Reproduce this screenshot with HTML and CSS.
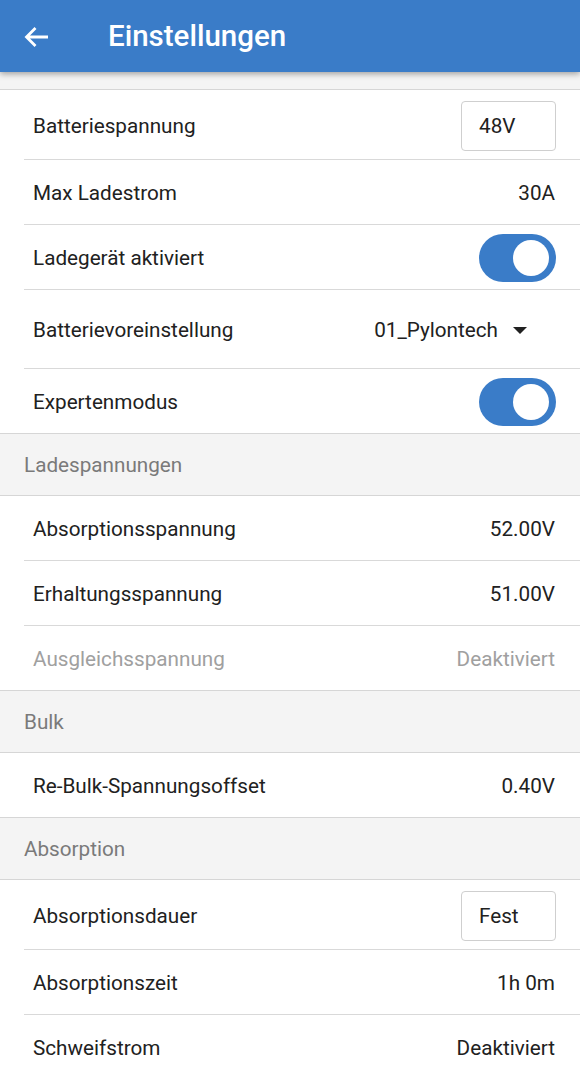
FILE: index.html
```html
<!DOCTYPE html>
<html lang="de">
<head>
<meta charset="utf-8">
<title>Einstellungen</title>
<link rel="stylesheet" href="styles.css">
</head>
<body>
<header class="appbar">
  <svg class="back" width="26" height="22" viewBox="0 0 26 22" aria-hidden="true">
    <path d="M25 11H3.5 M12.5 2 L3.5 11 L12.5 20" fill="none" stroke="#fff" stroke-width="2.8" stroke-linejoin="miter"/>
  </svg>
  <h1 class="title">Einstellungen</h1>
</header>
<main class="list">
  <div class="spacer"></div>
  <div class="group">
    <div class="row row-input"><span class="label">Batteriespannung</span><span class="box">48V</span></div>
    <div class="row"><span class="label">Max Ladestrom</span><span class="value">30A</span></div>
    <div class="row"><span class="label">Ladegerät aktiviert</span><span class="toggle"><span class="knob"></span></span></div>
    <div class="row row-select"><span class="label">Batterievoreinstellung</span><span class="select">01_Pylontech<span class="caret"></span></span></div>
    <div class="row"><span class="label">Expertenmodus</span><span class="toggle"><span class="knob"></span></span></div>
  </div>
  <div class="section">Ladespannungen</div>
  <div class="group">
    <div class="row"><span class="label">Absorptionsspannung</span><span class="value">52.00V</span></div>
    <div class="row"><span class="label">Erhaltungsspannung</span><span class="value">51.00V</span></div>
    <div class="row disabled"><span class="label">Ausgleichsspannung</span><span class="value">Deaktiviert</span></div>
  </div>
  <div class="section">Bulk</div>
  <div class="group">
    <div class="row"><span class="label">Re-Bulk-Spannungsoffset</span><span class="value">0.40V</span></div>
  </div>
  <div class="section">Absorption</div>
  <div class="group">
    <div class="row row-input"><span class="label">Absorptionsdauer</span><span class="box">Fest</span></div>
    <div class="row"><span class="label">Absorptionszeit</span><span class="value">1h 0m</span></div>
    <div class="row"><span class="label">Schweifstrom</span><span class="value">Deaktiviert</span></div>
  </div>
</main>
</body>
</html>
```
FILE: styles.css
```css
* { box-sizing: border-box; }
html, body { margin: 0; padding: 0; }
body {
  width: 580px;
  height: 1079px;
  overflow: hidden;
  background: #fff;
  font-family: Roboto, "Noto Sans", sans-serif;
  color: #212121;
}
.appbar {
  position: relative;
  z-index: 2;
  height: 72px;
  background: #3a7cc8;
  display: flex;
  align-items: center;
  padding-left: 23px;
  box-shadow: 0 2px 6px rgba(0,0,0,0.35);
}
.back { display: block; margin-top: 1px; }
.title {
  margin: 0 0 0 59px;
  font-size: 29.5px;
  font-weight: 500;
  color: #fff;
}
.list { display: flex; flex-direction: column; }
.spacer {
  height: 18px;
  background: #f4f4f4;
  border-bottom: 1px solid #d6d6d6;
}
.group { display: flex; flex-direction: column; }
.row {
  height: 65px;
  flex: none;
  margin-left: 24px;
  padding: 2px 25px 0 9px;
  display: flex;
  align-items: center;
  justify-content: space-between;
  border-bottom: 1px solid #d9d9d9;
  font-size: 20.7px;
}
.group .row:last-child { border-bottom: none; height: 64px; }
.row-input { height: 70px; }
.group .row-input:last-child { height: 70px; }
.row-select { height: 79px; }
.row.disabled { color: #a0a0a0; }
.box {
  width: 95px;
  height: 50px;
  border: 1px solid #cfcfcf;
  border-radius: 4px;
  display: flex;
  align-items: center;
  padding-left: 17px;
  margin-right: -1px;
}
.toggle {
  width: 77px;
  height: 48px;
  border-radius: 24px;
  background: #3a7cc8;
  display: flex;
  align-items: center;
  justify-content: flex-end;
  padding-right: 7px;
  margin-right: -1px;
}
.knob {
  width: 36px;
  height: 36px;
  border-radius: 50%;
  background: #fff;
}
.select {
  display: flex;
  align-items: center;
  margin-right: 28px;
}
.caret {
  width: 0;
  height: 0;
  margin-left: 15px;
  border-left: 7px solid transparent;
  border-right: 7px solid transparent;
  border-top: 7px solid #212121;
}
.section {
  height: 63px;
  flex: none;
  background: #f4f4f4;
  border-top: 1px solid #d6d6d6;
  border-bottom: 1px solid #d6d6d6;
  display: flex;
  align-items: center;
  padding-left: 24px;
  font-size: 20.7px;
  color: #7a7a7a;
}
```
